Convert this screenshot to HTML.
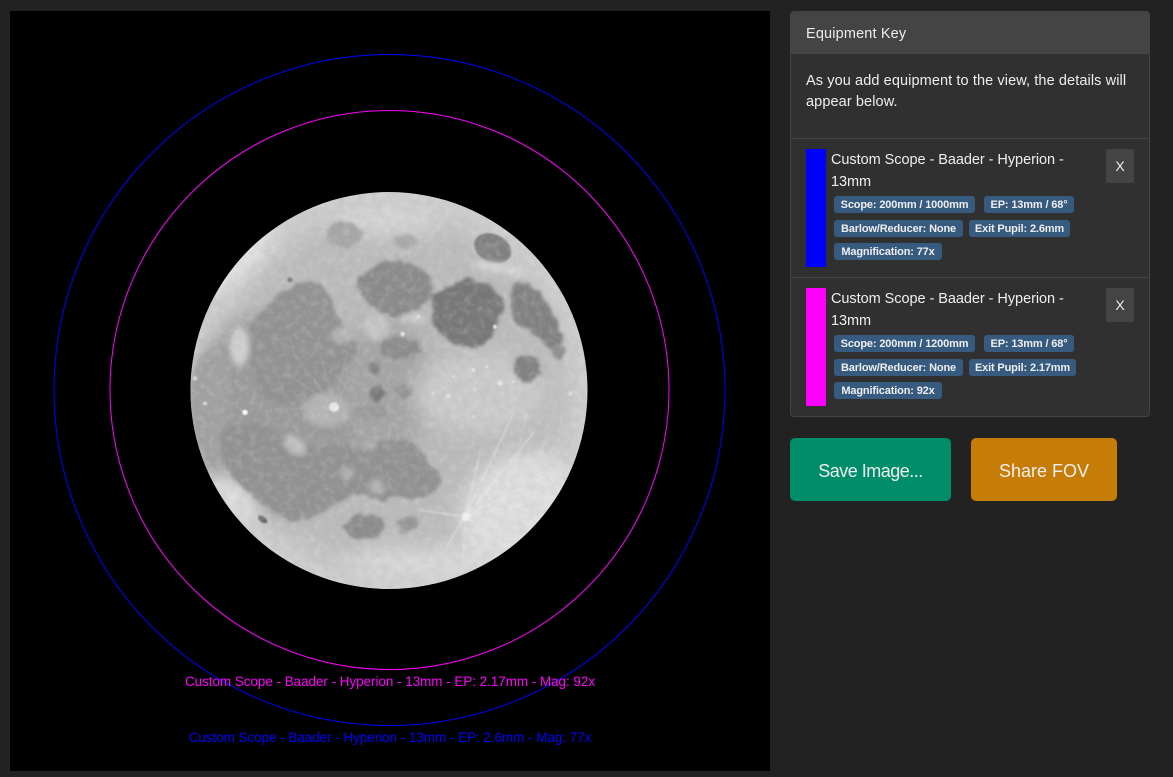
<!DOCTYPE html>
<html lang="en">
<head>
<meta charset="utf-8">
<title>FOV Calculator</title>
<style>
html,body{margin:0;padding:0;width:1173px;height:777px;overflow:hidden;background:#222;font-family:"Liberation Sans",Arial,sans-serif;color:#eee}
.a{position:absolute;white-space:nowrap}
#view{position:absolute;left:10px;top:11px;width:760px;height:760px;background:#000}
#card{position:absolute;left:790px;top:11px;width:358px;height:404px;background:#303030;border:1px solid #444;border-radius:4px}
#head{position:absolute;left:791px;top:12px;width:358px;height:42px;background:#444;border-radius:3px 3px 0 0}
.sep{position:absolute;left:791px;width:358px;height:1px;background:#444}
.t{font-size:14.5px;line-height:20px;color:#eee;letter-spacing:-.05px}
.sw{position:absolute;left:806px;width:20px;height:118px}
.x{position:absolute;left:1106px;width:28px;height:34px;background:#444;border:0;border-radius:2px;color:#eee;font:14px "Liberation Sans",Arial,sans-serif;padding:0}
.b{position:absolute;height:17px;line-height:18px;background:#375a7f;border-radius:3px;color:#eee;font-size:11px;font-weight:bold;text-align:center;white-space:nowrap;letter-spacing:-.15px}
.btn{position:absolute;top:438px;height:63px;border:0;border-radius:5px;color:#eee;font:18px "Liberation Sans",Arial,sans-serif;padding:3px 0 0}
</style>
</head>
<body>
<div id="view"></div>
<svg class="a" style="left:0;top:0" width="770" height="777" viewBox="0 0 770 777">
<defs>
<clipPath id="mc"><circle cx="389" cy="390.5" r="198.5"/></clipPath>
<radialGradient id="base" cx="50%" cy="50%" r="50%">
<stop offset="0" stop-color="#b8b8b8"/><stop offset=".8" stop-color="#bcbcbc"/><stop offset="1" stop-color="#cfcfcf"/>
</radialGradient>
<filter id="rough" x="-10%" y="-10%" width="120%" height="120%">
<feTurbulence type="fractalNoise" baseFrequency=".035" numOctaves="3" seed="4" result="n"/>
<feDisplacementMap in="SourceGraphic" in2="n" scale="26" xChannelSelector="R" yChannelSelector="G"/>
<feGaussianBlur stdDeviation="5"/>
</filter>
<filter id="bw" x="-30%" y="-30%" width="160%" height="160%"><feGaussianBlur stdDeviation="30"/></filter>
<filter id="bm" x="-30%" y="-30%" width="160%" height="160%"><feGaussianBlur stdDeviation="9"/></filter>
<filter id="bs" x="-30%" y="-30%" width="160%" height="160%"><feGaussianBlur stdDeviation="2.5"/></filter>
<filter id="noise" x="0" y="0" width="100%" height="100%">
<feTurbulence type="fractalNoise" baseFrequency=".11" numOctaves="4" seed="7"/>
<feColorMatrix values="0 0 0 0 .4  0 0 0 0 .4  0 0 0 0 .4  1.4 0 0 0 -.55"/>
</filter>
<filter id="noise2" x="0" y="0" width="100%" height="100%">
<feTurbulence type="fractalNoise" baseFrequency=".14" numOctaves="3" seed="21"/>
<feColorMatrix values="0 0 0 0 1  0 0 0 0 1  0 0 0 0 1  1.8 0 0 0 -.8"/>
</filter>
</defs>
<g clip-path="url(#mc)">
<circle cx="389" cy="390.5" r="199" fill="url(#base)"/>
<g transform="translate(180 180) scale(.33333)">
<g filter="url(#bw)">
<ellipse cx="290" cy="700" rx="270" ry="300" fill="#9a9a9a"/>
<ellipse cx="620" cy="620" rx="130" ry="200" fill="#a4a4a4"/>
<ellipse cx="1010" cy="980" rx="190" ry="150" fill="#dedede" transform="rotate(-40 1010 980)"/>
<ellipse cx="170" cy="240" rx="140" ry="45" fill="#e6e6e6" transform="rotate(-42 170 240)"/>
<ellipse cx="170" cy="950" rx="90" ry="40" fill="#e4e4e4" transform="rotate(45 170 950)"/>
<ellipse cx="750" cy="1150" rx="260" ry="50" fill="#d8d8d8"/>
<ellipse cx="900" cy="640" rx="200" ry="120" fill="#cacaca"/>
<ellipse cx="620" cy="120" rx="170" ry="50" fill="#d4d4d4"/>
</g>
<g filter="url(#rough)">
<path fill="#a0a0a0" d="M38 600C60 500 110 480 150 540C170 610 140 700 130 770C125 820 120 860 105 860C60 790 28 690 38 600Z"/>
<path fill="#929292" d="M210 440C250 400 300 300 400 305C470 320 440 400 530 490C535 540 480 560 450 620C380 660 310 690 250 650C210 570 200 500 210 440Z"/>
<path fill="#919191" d="M120 760C180 715 260 720 320 780C370 830 470 770 560 820C610 750 720 770 745 850C810 890 790 940 700 960C650 945 600 975 540 940C480 960 410 1015 350 1025C270 1000 180 920 130 850Z"/>
<path fill="#8a8a8a" d="M492 1040C510 1000 570 985 610 1020C625 1050 590 1080 540 1080C510 1075 490 1060 492 1040Z"/>
<path fill="#969696" d="M650 1025C670 1000 710 1005 715 1030C700 1055 670 1065 655 1055Z"/>
<path fill="#8a8a8a" d="M540 290C570 250 640 230 700 255C750 270 770 310 755 350C730 390 660 420 610 405C560 380 530 330 540 290Z"/>
<path fill="#777" d="M755 345C800 330 850 275 900 300C950 330 985 370 970 400C940 420 950 480 900 500C850 510 790 480 760 430Z"/>
<path fill="#808080" d="M990 320C1040 295 1090 330 1110 390C1140 440 1160 500 1135 535C1090 470 1020 450 995 400Z"/>
<ellipse cx="1042" cy="565" rx="40" ry="40" fill="#808080"/>
<ellipse cx="490" cy="165" rx="55" ry="38" fill="#a6a6a6"/>
<ellipse cx="675" cy="185" rx="32" ry="20" fill="#a8a8a8"/>
<ellipse cx="660" cy="505" rx="60" ry="33" fill="#8c8c8c"/>
<ellipse cx="590" cy="640" rx="24" ry="24" fill="#787878"/>
<ellipse cx="585" cy="565" rx="16" ry="22" fill="#808080"/>
<ellipse cx="670" cy="635" rx="28" ry="18" fill="#929292"/>
<ellipse cx="575" cy="695" rx="50" ry="22" fill="#9a9a9a"/>
<ellipse cx="1135" cy="515" rx="15" ry="22" fill="#8c8c8c"/>
</g>
<ellipse cx="938" cy="205" rx="58" ry="42" fill="#808080" transform="rotate(25 938 205)" filter="url(#bs)"/>
<g filter="url(#bm)">
<ellipse cx="178" cy="500" rx="30" ry="58" fill="#cfcfcf"/>
<ellipse cx="490" cy="465" rx="38" ry="24" fill="#b4b4b4"/>
<ellipse cx="345" cy="795" rx="38" ry="24" fill="#c0c0c0" transform="rotate(40 345 795)"/>
<ellipse cx="440" cy="690" rx="70" ry="50" fill="#b4b4b4"/>
<ellipse cx="500" cy="880" rx="22" ry="20" fill="#b0b0b0"/>
<ellipse cx="590" cy="920" rx="22" ry="24" fill="#b4b4b4"/>
<ellipse cx="960" cy="265" rx="90" ry="16" fill="#d4d4d4" transform="rotate(10 960 265)"/>
<ellipse cx="700" cy="415" rx="38" ry="14" fill="#cacaca"/>
<ellipse cx="590" cy="440" rx="40" ry="40" fill="#c4c4c4"/>
</g>
<g filter="url(#bs)" fill="none" stroke-linecap="round">
<path d="M462 680L340 520M462 680L420 520M462 680L530 560M462 680L280 690M462 680L390 770M462 680L560 770M462 680L350 600M462 680L500 530" stroke="#c0c0c0" stroke-width="3" opacity=".4"/>
<path d="M855 1010L1060 760M855 1010L1000 700M855 1010L900 820M855 1010L1130 870M855 1010L720 990M855 1010L850 1130M855 1010L980 1100M855 1010L950 900M855 1010L1170 940M855 1010L800 1100" stroke="#eaeaea" stroke-width="5" opacity=".45"/>
<path d="M1000 960L1150 800M1040 700L1000 880M1100 760L1060 900" stroke="#e0e0e0" stroke-width="4" opacity=".4"/>
</g>
<g filter="url(#bs)">
<ellipse cx="857" cy="1010" rx="14" ry="13" fill="#eee"/>
<ellipse cx="462" cy="681" rx="15" ry="14" fill="#eee"/>
<circle cx="195" cy="697" r="8" fill="#fff"/>
<ellipse cx="248" cy="1018" rx="16" ry="9" fill="#666" transform="rotate(35 248 1018)"/>
<circle cx="330" cy="300" r="8" fill="#808080"/>
<g fill="#e4e4e4"><circle cx="805" cy="648" r="7"/><circle cx="880" cy="570" r="7"/><circle cx="960" cy="610" r="8"/><circle cx="885" cy="630" r="5"/><circle cx="668" cy="462" r="7"/><circle cx="945" cy="440" r="6"/><circle cx="1170" cy="640" r="6"/><circle cx="75" cy="670" r="5"/><circle cx="45" cy="595" r="6"/><circle cx="880" cy="710" r="4"/><circle cx="715" cy="410" r="5"/><circle cx="820" cy="590" r="4"/><circle cx="1000" cy="605" r="5"/><circle cx="760" cy="640" r="4"/><circle cx="920" cy="560" r="4"/></g>
</g>
</g>
<rect x="190" y="191" width="400" height="400" filter="url(#noise)" opacity=".3"/>
<rect x="190" y="191" width="400" height="400" filter="url(#noise2)" opacity=".2"/>
</g>
<circle cx="389.5" cy="390" r="335.5" fill="none" stroke="#0000ff" stroke-width="1"/>
<circle cx="389.5" cy="390" r="279.5" fill="none" stroke="#ff00ff" stroke-width="1"/>
<text x="390" y="686" fill="#ff00ff" font-family="Liberation Sans,Arial,sans-serif" font-size="13.4" text-anchor="middle">Custom Scope - Baader - Hyperion - 13mm - EP: 2.17mm - Mag: 92x</text>
<text x="390" y="742" fill="#0000ff" font-family="Liberation Sans,Arial,sans-serif" font-size="13.4" text-anchor="middle">Custom Scope - Baader - Hyperion - 13mm - EP: 2.6mm - Mag: 77x</text>
</svg>

<div id="card"></div>
<div id="head"></div>
<div class="a t" style="left:806px;top:24px;letter-spacing:.15px">Equipment Key</div>
<div class="a t" style="left:806px;top:71px;line-height:21px;letter-spacing:.1px">As you add equipment to the view, the details will<br>appear below.</div>

<div class="sep" style="top:138px"></div>
<div class="sw" style="top:149px;background:#00f"></div>
<div class="a t" style="left:831px;top:149px;line-height:22px">Custom Scope - Baader - Hyperion -<br>13mm</div>
<button class="x" style="top:149px">X</button>
<div class="b" style="left:834px;top:196px;width:141px">Scope: 200mm / 1000mm</div>
<div class="b" style="left:984px;top:196px;width:90px">EP: 13mm / 68°</div>
<div class="b" style="left:834px;top:220px;width:129px">Barlow/Reducer: None</div>
<div class="b" style="left:969px;top:220px;width:101px">Exit Pupil: 2.6mm</div>
<div class="b" style="left:834px;top:243px;width:108px">Magnification: 77x</div>

<div class="sep" style="top:277px"></div>
<div class="sw" style="top:288px;background:#f0f"></div>
<div class="a t" style="left:831px;top:288px;line-height:22px">Custom Scope - Baader - Hyperion -<br>13mm</div>
<button class="x" style="top:288px">X</button>
<div class="b" style="left:834px;top:335px;width:141px">Scope: 200mm / 1200mm</div>
<div class="b" style="left:984px;top:335px;width:90px">EP: 13mm / 68°</div>
<div class="b" style="left:834px;top:359px;width:129px">Barlow/Reducer: None</div>
<div class="b" style="left:969px;top:359px;width:107px">Exit Pupil: 2.17mm</div>
<div class="b" style="left:834px;top:382px;width:108px">Magnification: 92x</div>

<button class="btn" style="left:790px;width:161px;background:#008d69;letter-spacing:-.5px">Save Image...</button>
<button class="btn" style="left:971px;width:146px;background:#c67d08">Share FOV</button>
</body>
</html>
